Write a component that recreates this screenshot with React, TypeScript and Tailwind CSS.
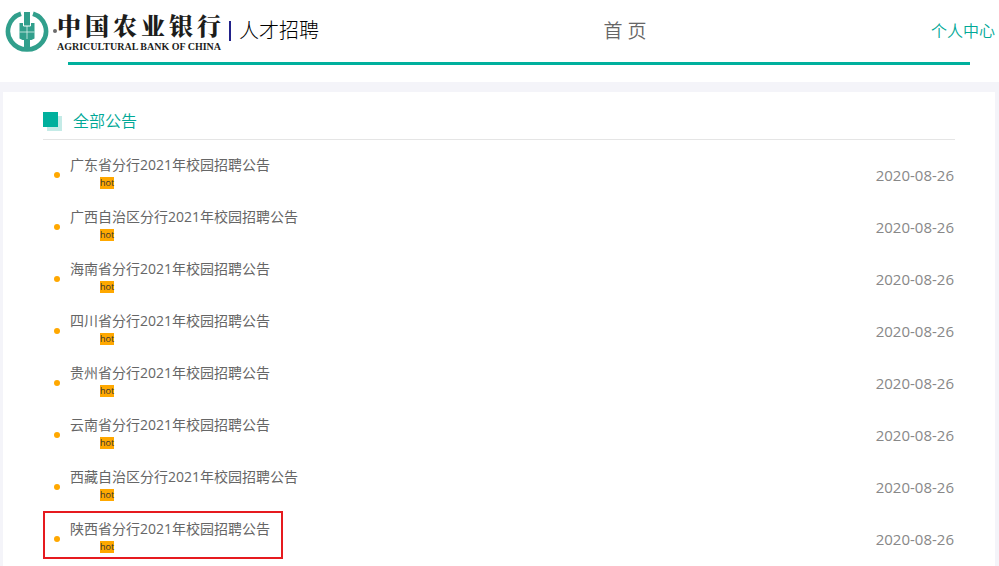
const notices = [
  { title: "广东省分行2021年校园招聘公告", date: "2020-08-26" },
  { title: "广西自治区分行2021年校园招聘公告", date: "2020-08-26" },
  { title: "海南省分行2021年校园招聘公告", date: "2020-08-26" },
  { title: "四川省分行2021年校园招聘公告", date: "2020-08-26" },
  { title: "贵州省分行2021年校园招聘公告", date: "2020-08-26" },
  { title: "云南省分行2021年校园招聘公告", date: "2020-08-26" },
  { title: "西藏自治区分行2021年校园招聘公告", date: "2020-08-26" },
  { title: "陕西省分行2021年校园招聘公告", date: "2020-08-26", marked: true },
];

function BankLogo() {
  return (
    <svg className="size-11 shrink-0" viewBox="0 0 44 44" fill="none">
      <path d="M16 4.7A19 18.4 0 1 0 28 4.7" stroke="#319f8c" strokeWidth="4.6" />
      {/* stalk and ear of wheat */}
      <path
        d="M19 3h6v13h1V14h3.500v15.500L26.500 31H25v8c0 1 2 2 4 2H15c2 0 4-1 4-2v-8h-1.500L14.500 29.500V14H18v2h1z"
        fill="#319f8c"
      />
      <path d="M14.500 23h15M22 17v13" stroke="#d9efeb" strokeWidth="0.8" />
      <path d="M18.500 14v3h7v-3" stroke="#fff" strokeWidth="1" />
    </svg>
  );
}

function Header() {
  return (
    <header className="h-[82px] bg-white">
      <div className="flex h-[62px] items-center justify-between pl-[5px] pr-1">
        <div className="flex items-center">
          <BankLogo />
          <span className="ml-1 size-1 rounded-full bg-[#6b6b6b]" />
          <div className="text-[#1d1d1b]">
            <div className="flex w-[164px] justify-between font-['Noto_Serif_CJK_SC','Noto_Sans_CJK_SC',serif] text-2xl leading-8 font-black">
              {[..."中国农业银行"].map((char) => (
                <span key={char}>{char}</span>
              ))}
            </div>
            <div className="font-['Liberation_Serif',serif] text-[10px] leading-3 font-bold whitespace-nowrap">
              AGRICULTURAL BANK OF CHINA
            </div>
          </div>
          <span className="ml-2 h-5 w-0.5 bg-[#22228a]" />
          <h1 className="ml-2 text-xl font-light text-black">人才招聘</h1>
        </div>
        <a href="#home" className="text-[19px] font-[350] text-[#666]">首 页</a>
        <a href="#user" className="text-base font-[350] text-[#00a896]">个人中心</a>
      </div>
      <div className="ml-[68px] mr-[29px] h-[3px] bg-[#00b09d]" />
    </header>
  );
}

export default function App() {
  return (
    <div className="flex min-h-screen flex-col bg-[#f4f4f9] font-['Open_Sans','Noto_Sans_CJK_SC',sans-serif]">
      <Header />
      <main className="mt-2.5 mr-1 ml-[3px] flex-1 bg-white px-10 pt-3">
        <div className="flex h-9 items-center border-b border-[#e5e5e5]">
          <span className="relative size-[19px]">
            <span className="absolute right-0 bottom-0 size-[15px] bg-[#c4ebe7]" />
            <span className="absolute top-0 left-0 size-[15px] bg-[#00b09d]" />
          </span>
          <h2 className="ml-[11px] pb-0.5 text-base font-[350] text-[#00a896]">全部公告</h2>
        </div>
        <ul className="pt-[9px]">
          {notices.map((notice) => (
            <li key={notice.title} className="relative flex h-[52px] items-center">
              <span className="ml-[11px] size-1.5 rounded-full bg-[#ffa800]" />
              <div className="ml-2.5 pb-2">
                <a href="#notice" className="block text-sm leading-6 text-[#666]">{notice.title}</a>
                <span className="ml-[30px] block w-fit bg-[#ffa800] text-[9px] leading-3 text-[#333]">hot</span>
              </div>
              <time className="mr-px ml-auto text-[15px] text-[#888]">{notice.date}</time>
              {notice.marked && (
                <span className="absolute -top-0.5 left-0 h-12 w-60 border-2 border-[#e61a1f]" />
              )}
            </li>
          ))}
        </ul>
      </main>
    </div>
  );
}
